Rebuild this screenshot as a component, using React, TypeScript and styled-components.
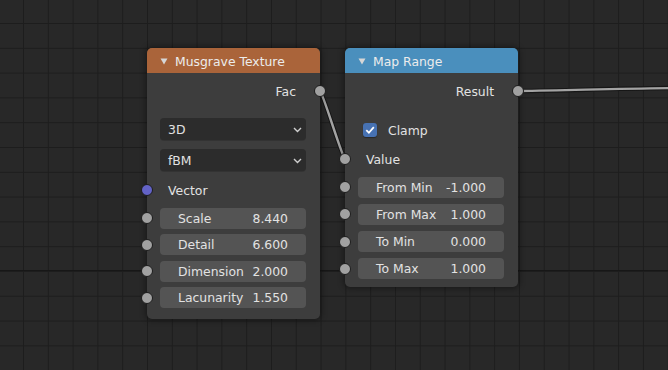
import styled, { createGlobalStyle } from 'styled-components'

const GlobalStyle = createGlobalStyle`
  html, body {
    margin: 0;
    padding: 0;
    background: #282828;
  }
  body {
    font-family: 'DejaVu Sans', 'Liberation Sans', sans-serif;
  }
`

type NodeSpec = {
  x: number
  y: number
  title: string
  color: string
}

const FloatField = ({ label, value }: { label: string; value: string }) => (
  <Row>
    <Socket $side={'left'} />
    <Field>
      <span>{label}</span>
      <span>{value}</span>
    </Field>
  </Row>
)

const Dropdown = ({ value, top }: { value: string; top: number }) => (
  <Select $top={top}>
    <span>{value}</span>
    <svg width="9" height="6" viewBox="0 0 9 6">
      <polyline points="1,1 4.5,4.5 8,1" fill="none" stroke="#cfcfcf" strokeWidth="1.4" />
    </svg>
  </Select>
)

const NodeFrame = ({ spec, pb, children }: { spec: NodeSpec; pb: number; children: React.ReactNode }) => (
  <Node $x={spec.x} $y={spec.y}>
    <Header $color={spec.color}>
      <svg width="8" height="7" viewBox="0 0 8 7">
        <polygon points="0.5,0.5 7.5,0.5 4,6.5" fill="#d6d6d6" />
      </svg>
      {spec.title}
    </Header>
    <Body $pb={pb}>{children}</Body>
  </Node>
)

// links between sockets, drawn under the nodes
const LINKS = ['M320 91 C 323 93, 342 157, 345 159', 'M518 91 C 580 90, 620 88.5, 680 88']

const App = () => {
  return (
    <>
      <GlobalStyle />
      <Canvas>
        <Links width="668" height="370" viewBox="0 0 668 370">
          {LINKS.map((d) => (
            <path key={d + 'o'} d={d} fill="none" stroke="#161616" strokeWidth="4.5" />
          ))}
          {LINKS.map((d) => (
            <path key={d} d={d} fill="none" stroke="#a3a3a3" strokeWidth="2.4" />
          ))}
        </Links>

        <NodeFrame spec={{ x: 147, y: 48, title: 'Musgrave Texture', color: '#aa643a' }} pb={10}>
          <Row $top={7}>
            <OutputLabel>Fac</OutputLabel>
            <Socket $side={'right'} />
          </Row>
          <Dropdown value={'3D'} top={16} />
          <Dropdown value={'fBM'} top={9} />
          <Row $top={8}>
            <Socket $side={'left'} $color={'#6363c7'} />
            <InputLabel>Vector</InputLabel>
          </Row>
          <Fields $top={6} $gap={4.67}>
            <FloatField label={'Scale'} value={'8.440'} />
            <FloatField label={'Detail'} value={'6.600'} />
            <FloatField label={'Dimension'} value={'2.000'} />
            <FloatField label={'Lacunarity'} value={'1.550'} />
          </Fields>
        </NodeFrame>

        <NodeFrame spec={{ x: 345, y: 48, title: 'Map Range', color: '#4a8fbd' }} pb={7}>
          <Row $top={7}>
            <OutputLabel>Result</OutputLabel>
            <Socket $side={'right'} />
          </Row>
          <Row $top={17}>
            <CheckBox>
              <svg width="12" height="12" viewBox="0 0 12 12">
                <polyline points="2.3,6.2 4.9,8.8 9.8,3.2" fill="none" stroke="#ffffff" strokeWidth="1.8" />
              </svg>
            </CheckBox>
            <CheckLabel>Clamp</CheckLabel>
          </Row>
          <Row $top={7}>
            <Socket $side={'left'} />
            <InputLabel>Value</InputLabel>
          </Row>
          <Fields $top={6} $gap={5.33}>
            <FloatField label={'From Min'} value={'-1.000'} />
            <FloatField label={'From Max'} value={'1.000'} />
            <FloatField label={'To Min'} value={'0.000'} />
            <FloatField label={'To Max'} value={'1.000'} />
          </Fields>
        </NodeFrame>
      </Canvas>
    </>
  )
}

const Canvas = styled.div`
  position: relative;
  width: 668px;
  height: 370px;
  overflow: hidden;
  background-color: #282828;
  background-image: linear-gradient(
      to bottom,
      transparent 270px,
      #171717 270px,
      #171717 271px,
      transparent 271px
    ),
    linear-gradient(to right, #1d1d1d 1px, transparent 1px),
    linear-gradient(to bottom, #1d1d1d 1px, transparent 1px);
  background-size: 100% 100%, 24.8px 24.8px, 24.8px 24.8px;
  background-position: 0 0, 23px 0, 0 23px;
  background-repeat: no-repeat, repeat, repeat;
`

const Links = styled.svg`
  position: absolute;
  left: 0;
  top: 0;
`

const Node = styled.div<{ $x: number; $y: number }>`
  position: absolute;
  left: ${(p) => p.$x}px;
  top: ${(p) => p.$y}px;
  width: 173px;
  background: #3d3d3d;
  border-radius: 5px;
  box-shadow: 0 0 6px 1px rgba(0, 0, 0, 0.45);
  color: #e2e2e2;
  font-size: 12.4px;
`

const Header = styled.div<{ $color: string }>`
  height: 25px;
  display: flex;
  align-items: center;
  gap: 7px;
  padding-left: 13px;
  padding-top: 1px;
  box-sizing: border-box;
  background: ${(p) => p.$color};
  border-radius: 5px 5px 0 0;
  color: #ececec;
  svg {
    margin-top: 0px;
  }
`

const Body = styled.div<{ $pb: number }>`
  display: flex;
  flex-direction: column;
  padding: 0 14px ${(p) => p.$pb}px 13px;
`

const Row = styled.div<{ $top?: number }>`
  position: relative;
  height: 22px;
  display: flex;
  align-items: center;
  margin-top: ${(p) => p.$top ?? 0}px;
  padding-top: 1px;
  box-sizing: border-box;
`

const Socket = styled.span<{ $side: 'left' | 'right'; $color?: string }>`
  position: absolute;
  top: 50%;
  ${(p) => (p.$side === 'left' ? 'left: -19px;' : 'right: -20px;')}
  width: 10px;
  height: 10px;
  margin-top: -6px;
  border-radius: 50%;
  border: 1px solid #1c1c1c;
  background: ${(p) => p.$color ?? '#a1a1a1'};
`

const OutputLabel = styled.span`
  margin-left: auto;
  padding-right: 10px;
`

const InputLabel = styled.span`
  padding-left: 8px;
`

const Select = styled.div<{ $top: number }>`
  height: 22px;
  margin-top: ${(p) => p.$top}px;
  display: flex;
  align-items: center;
  justify-content: space-between;
  padding: 1px 4px 0 8px;
  box-sizing: border-box;
  background: #2c2c2c;
  border-radius: 4px;
  box-shadow: 0 1px 0 rgba(0, 0, 0, 0.15);
`

const Fields = styled.div<{ $top: number; $gap: number }>`
  display: flex;
  flex-direction: column;
  gap: ${(p) => p.$gap}px;
  margin-top: ${(p) => p.$top}px;
`

const Field = styled.div`
  flex: 1;
  height: 21px;
  display: flex;
  align-items: center;
  justify-content: space-between;
  padding: 0 18px;
  margin-top: -1px;
  background: #545454;
  border-radius: 4px;
`

const CheckBox = styled.span`
  width: 14px;
  height: 14px;
  margin-left: 5px;
  margin-top: -1px;
  border-radius: 3px;
  background: #4772b3;
  display: flex;
  align-items: center;
  justify-content: center;
  box-shadow: 0 1px 1px rgba(0, 0, 0, 0.35);
`

const CheckLabel = styled.span`
  margin-left: 11px;
`

export default App
